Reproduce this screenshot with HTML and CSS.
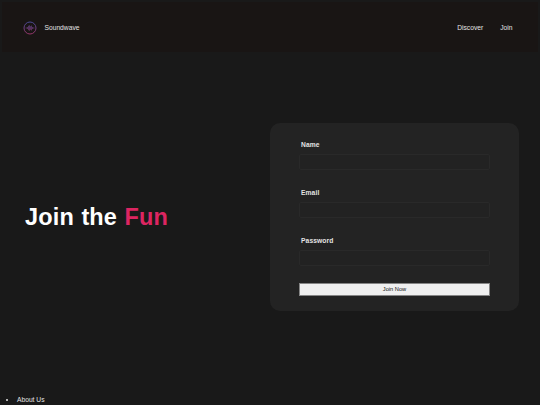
FILE: index.html
```html
<!DOCTYPE html>
<html lang="en">
<head>
<meta charset="utf-8">
<title>Soundwave</title>
<link rel="stylesheet" href="styles.css">
</head>
<body>
<header class="nav">
  <a class="brand">
    <svg class="logo" viewBox="0 0 14 14" fill="none" stroke="url(#g)">
      <defs><linearGradient id="g" gradientUnits="userSpaceOnUse" x1="7" y1="0" x2="7" y2="14"><stop offset="0" stop-color="#414c9a"/><stop offset="1" stop-color="#9b3263"/></linearGradient></defs>
      <circle cx="7" cy="7" r="6" stroke-width="1"/>
      <path stroke-width=".7" d="M2.5 6.8V7.2M3.5 6.5V7.5M4.5 6V8M5.5 4.8V9.2M6.5 4.3V9.7M7.5 5.2V8.8M8.5 4.6V9.4M9.5 6V8M10.5 6.5V7.5M11.5 6.8V7.2"/>
    </svg>
    <span>Soundwave</span>
  </a>
  <nav class="links"><a>Discover</a><a>Join</a></nav>
</header>
<main class="hero">
  <h1 class="title">Join the <span class="accent">Fun</span></h1>
  <form class="card">
    <label class="label" for="name">Name</label>
    <input class="field" id="name" type="text">
    <label class="label" for="email">Email</label>
    <input class="field" id="email" type="email">
    <label class="label" for="password">Password</label>
    <input class="field" id="password" type="password">
    <button class="submit" type="button">Join Now</button>
  </form>
</main>
<footer>
  <ul class="footer-links"><li>About Us</li></ul>
</footer>
</body>
</html>
```
FILE: styles.css
```css
* { box-sizing: border-box; }
body {
  margin: 0;
  height: 405px;
  overflow: hidden;
  background: #191919;
  color: #e4e4e4;
  font: 6.7px/10px "Liberation Sans", Arial, sans-serif;
}
.nav {
  display: flex;
  justify-content: space-between;
  align-items: center;
  height: 50px;
  margin: 2px 2px 0;
  padding: 1px 25.5px 0 20.5px;
  background: #191514;
}
.brand { display: flex; align-items: center; gap: 8px; }
.logo { width: 14px; height: 14px; }
.links { display: flex; gap: 17px; }
.hero {
  display: flex;
  align-items: center;
  height: 330px;
  padding: 0 21px 0 25px;
}
.title {
  flex: 0 0 245px;
  margin: 0;
  font-size: 23.5px;
  line-height: 28px;
  letter-spacing: .15px;
  word-spacing: .8px;
  color: #fff;
}
.accent { color: #dc2561; }
.card {
  display: flex;
  flex-direction: column;
  width: 249px;
  height: 188px;
  padding: 17px 29px 0;
  border-radius: 10px;
  background: #232323;
}
.label {
  height: 10px;
  margin-left: 2px;
  font-weight: 700;
  letter-spacing: .1px;
}
.field {
  height: 16px;
  margin: 4px 0 18px;
  padding: 0 4px;
  border: 1px solid #292929;
  border-radius: 2px;
  background: #222;
  color: #fff;
}
.submit {
  height: 12.5px;
  margin-top: -1px;
  padding: 0;
  border: 1px solid #858585;
  border-radius: 0;
  background: #efefef;
  color: #111;
  font: 5.7px/10px "Liberation Sans", Arial, sans-serif;
}
.footer-links {
  margin: 13px 0 0;
  padding-left: 17px;
}
```
